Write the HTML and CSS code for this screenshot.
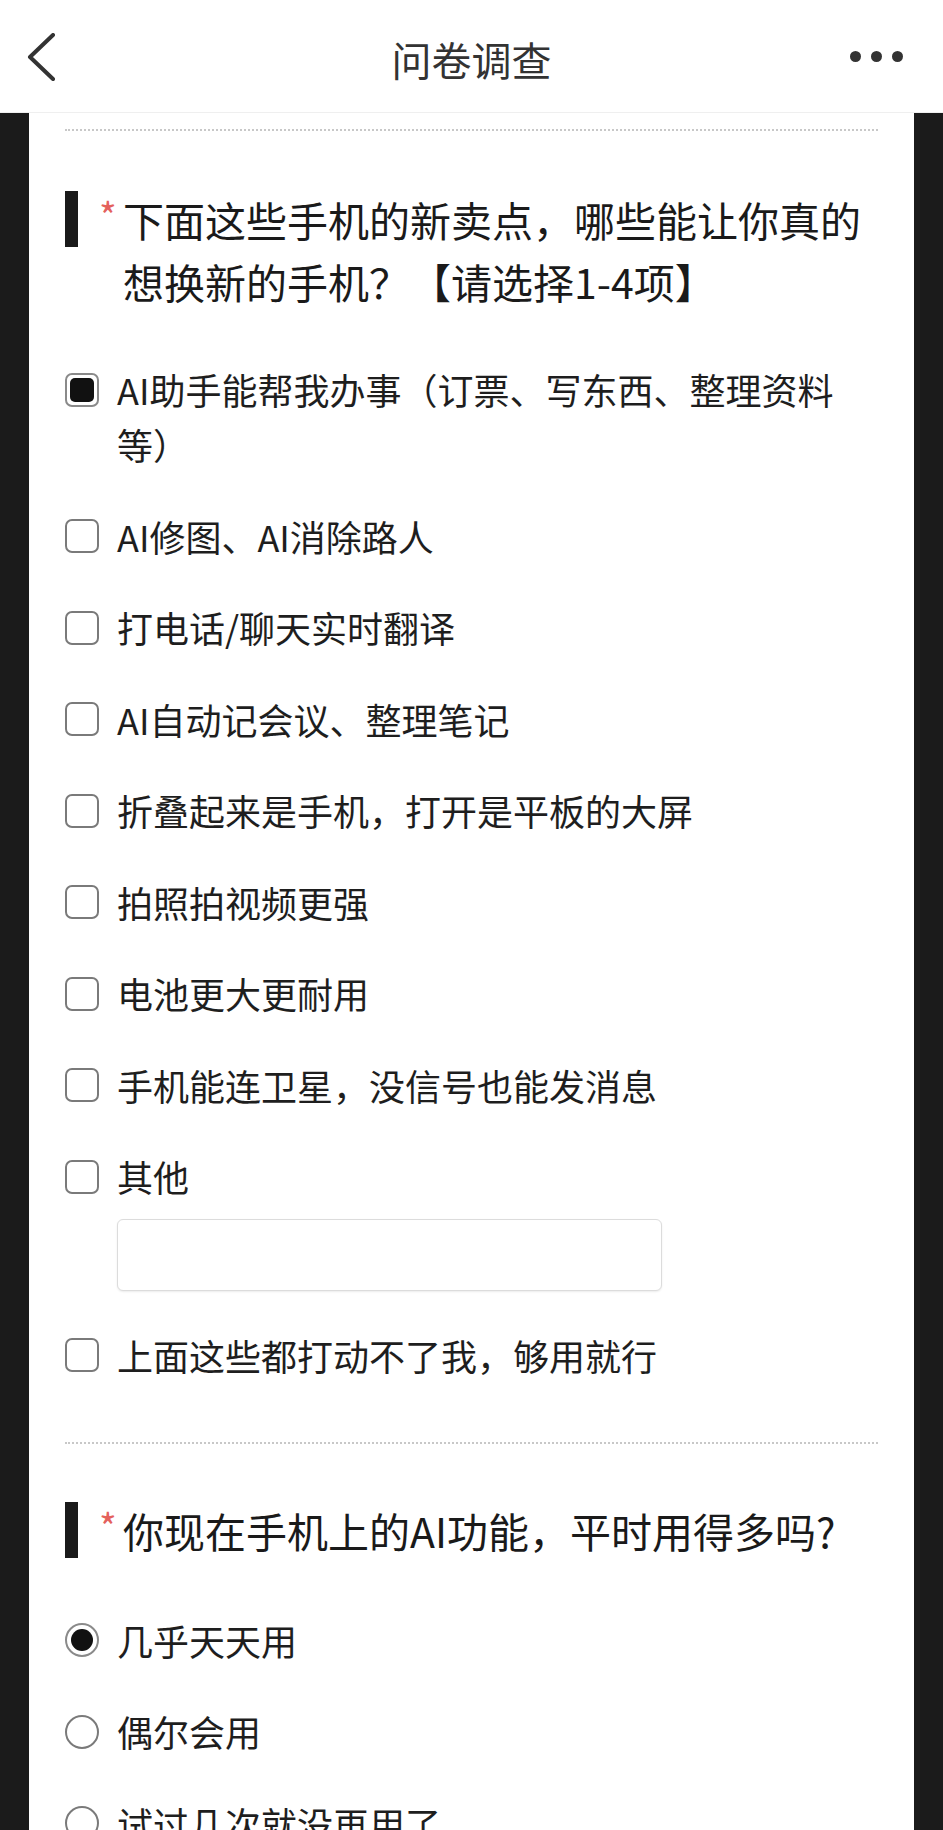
FILE: index.html
```html
<!DOCTYPE html>
<html lang="zh-CN">
<head>
<meta charset="utf-8">
<title>问卷调查</title>
<link rel="stylesheet" href="styles.css">
</head>
<body>
<header class="topbar">
  <div class="left">
    <svg class="back" width="30" height="48" viewBox="0 0 30 48"><polyline points="26,2 3,24 26,46" fill="none" stroke="#333" stroke-width="4" stroke-linecap="round" stroke-linejoin="round"/></svg>
  </div>
  <h1 class="title">问卷调查</h1>
  <div class="right">
    <div class="more"><span></span><span></span><span></span></div>
  </div>
</header>
<main class="page">
  <div class="card">
    <section class="question">
      <div class="divider"></div>
      <div class="q-title"><span class="bar"></span><span class="star">*</span><span class="q-text">下面这些手机的新卖点，哪些能让你真的想换新的手机？【请选择1-4项】</span></div>
      <ul class="options">
        <li class="option"><span class="box checked"></span><span class="label">AI助手能帮我办事（订票、写东西、整理资料等）</span></li>
        <li class="option"><span class="box"></span><span class="label">AI修图、AI消除路人</span></li>
        <li class="option"><span class="box"></span><span class="label">打电话/聊天实时翻译</span></li>
        <li class="option"><span class="box"></span><span class="label">AI自动记会议、整理笔记</span></li>
        <li class="option"><span class="box"></span><span class="label">折叠起来是手机，打开是平板的大屏</span></li>
        <li class="option"><span class="box"></span><span class="label">拍照拍视频更强</span></li>
        <li class="option"><span class="box"></span><span class="label">电池更大更耐用</span></li>
        <li class="option"><span class="box"></span><span class="label">手机能连卫星，没信号也能发消息</span></li>
        <li class="option other">
          <div class="row"><span class="box"></span><span class="label">其他</span></div>
          <div class="input"></div>
        </li>
        <li class="option"><span class="box"></span><span class="label">上面这些都打动不了我，够用就行</span></li>
      </ul>
    </section>
    <section class="question second">
      <div class="divider"></div>
      <div class="q-title"><span class="bar"></span><span class="star">*</span><span class="q-text">你现在手机上的AI功能，平时用得多吗?</span></div>
      <ul class="options">
        <li class="option"><span class="radio checked"></span><span class="label">几乎天天用</span></li>
        <li class="option"><span class="radio"></span><span class="label">偶尔会用</span></li>
        <li class="option"><span class="radio"></span><span class="label">试过几次就没再用了</span></li>
      </ul>
    </section>
  </div>
</main>
</body>
</html>
```
FILE: styles.css
```css
html, body {
  margin: 0;
  padding: 0;
}
body {
  background: #1b1b1b;
  font-family: "Noto Sans CJK SC", "Noto Sans", sans-serif;
  color: #1e1e1e;
  width: 943px;
  min-height: 1830px;
  overflow: hidden;
}
.topbar {
  height: 112px;
  background: #fff;
  border-bottom: 1px solid #efefef;
  display: grid;
  grid-template-columns: 1fr auto 1fr;
  align-items: center;
}
.left {
  padding-left: 27px;
  display: flex;
  align-items: center;
  padding-top: 2px;
}
.back {
  display: block;
}
.title {
  margin: 0;
  font-size: 40px;
  font-weight: 400;
  color: #333;
  line-height: 1;
  padding-top: 6px;
}
.right {
  display: flex;
  justify-content: flex-end;
  padding-right: 40px;
}
.more {
  display: flex;
  gap: 10px;
}
.more span {
  width: 11px;
  height: 11px;
  border-radius: 50%;
  background: #333;
}
.page {
  padding: 0 29px;
}
.card {
  background: #fff;
  padding: 16px 36px 0 36px;
  min-height: 1717px;
}
.divider {
  height: 0;
  border-top: 2px dotted #c8c8c8;
}
.question.second .divider {
  margin-top: 59px;
}
.q-title {
  display: flex;
  align-items: flex-start;
  margin-top: 57px;
}
.question.second .q-title {
  margin-top: 55px;
}
.bar {
  flex: none;
  width: 13px;
  height: 56px;
  margin-top: 3px;
  margin-right: 21px;
  background: #1a1a1a;
}
.star {
  flex: none;
  width: 24px;
  font-size: 38px;
  line-height: 54px;
  color: #e4615c;
}
.q-text {
  flex: 1;
  font-size: 41px;
  line-height: 62px;
  color: #1a1a1a;
}
.options {
  list-style: none;
  margin: 50px 0 0 0;
  padding: 0;
  display: flex;
  flex-direction: column;
  gap: 36.5px;
}
.question.second .options {
  margin-top: 52px;
}
.option {
  display: flex;
  align-items: flex-start;
}
.option.other {
  flex-direction: column;
}
.row {
  display: flex;
  align-items: flex-start;
}
.box, .radio {
  flex: none;
  box-sizing: border-box;
  width: 34px;
  height: 34px;
  margin-top: 10.5px;
  border: 2px solid #7a7a7a;
  background: #fff;
  position: relative;
}
.box {
  border-radius: 7px;
}
.radio {
  border-radius: 50%;
}
.box.checked::after, .radio.checked::after {
  content: "";
  position: absolute;
  background: #111;
}
.box.checked::after {
  inset: 3px;
  border-radius: 5px;
}
.radio.checked::after {
  inset: 4px;
  border-radius: 50%;
}
.box.checked, .radio.checked {
  border-color: #8a8a8a;
}
.label {
  margin-left: 18px;
  font-size: 36px;
  line-height: 55px;
  color: #1e1e1e;
  max-width: 738px;
}
.input {
  margin-left: 52px;
  margin-top: 15px;
  width: 545px;
  height: 72px;
  box-sizing: border-box;
  border: 1px solid #dcdcdc;
  border-radius: 6px;
  box-shadow: 0 1px 2px rgba(0, 0, 0, 0.08);
  background: #fff;
}
```
